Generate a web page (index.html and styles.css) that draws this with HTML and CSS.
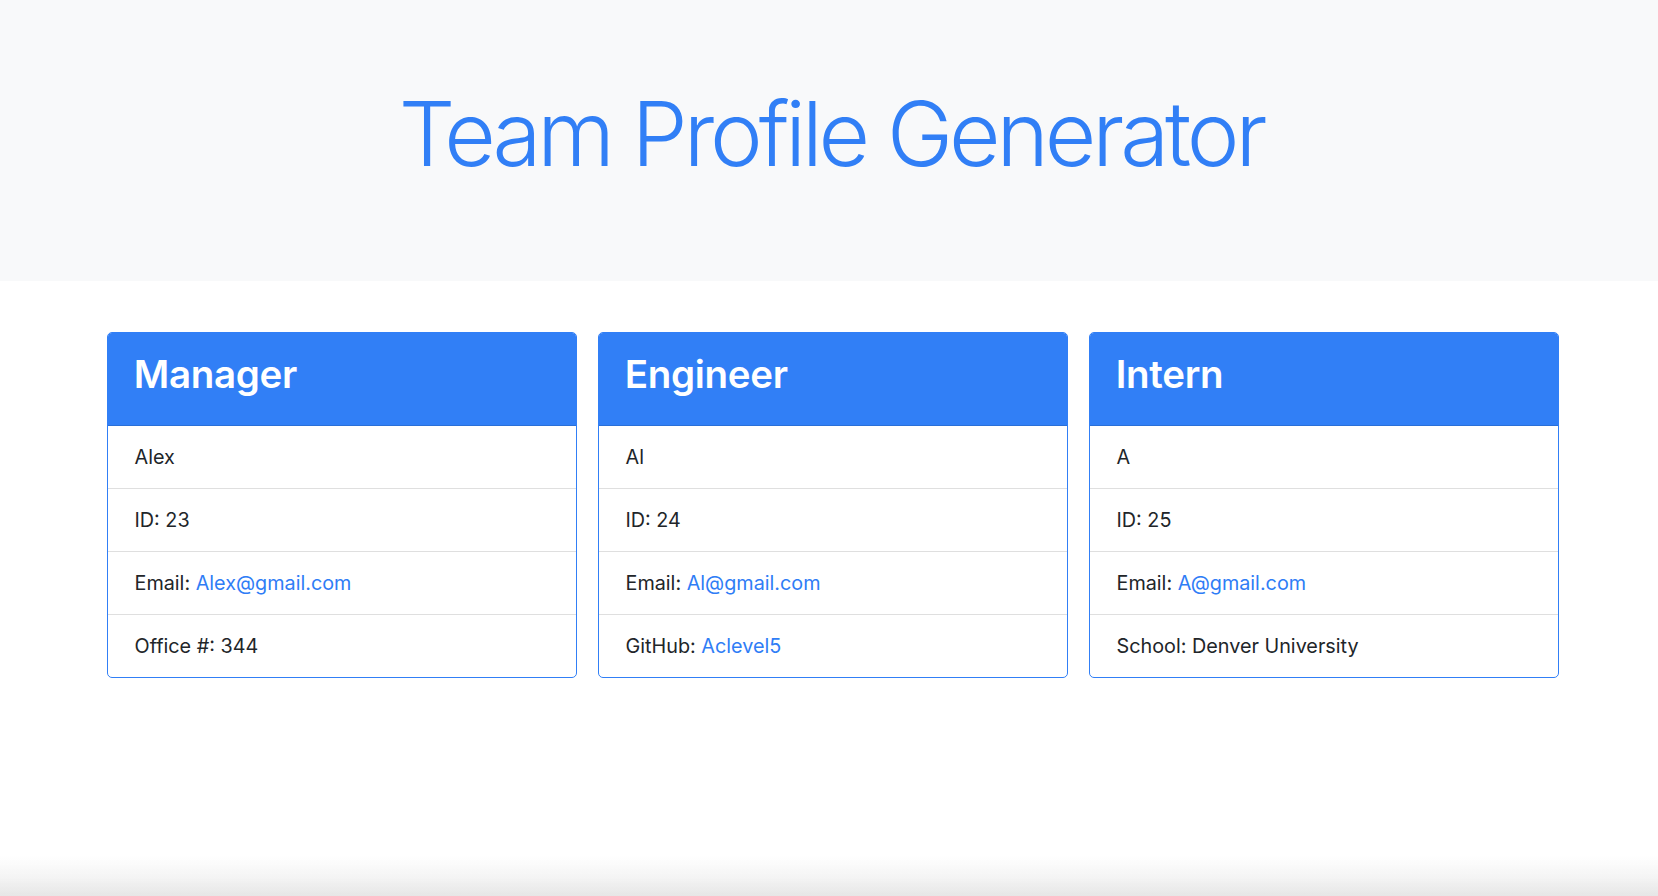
FILE: index.html
```html
<!DOCTYPE html>
<html lang="en">
<head>
<meta charset="utf-8">
<title>Team Profile Generator</title>
<link rel="stylesheet" href="styles.css">
</head>
<body>
<header class="jumbotron">
  <h1 class="title">Team Profile Generator</h1>
</header>
<main class="team">
  <section class="card">
    <div class="card-header"><h2>Manager</h2></div>
    <ul class="list">
      <li>Alex</li>
      <li>ID: 23</li>
      <li>Email: <a href="#">Alex@gmail.com</a></li>
      <li>Office #: 344</li>
    </ul>
  </section>
  <section class="card">
    <div class="card-header"><h2>Engineer</h2></div>
    <ul class="list">
      <li>Al</li>
      <li>ID: 24</li>
      <li>Email: <a href="#">Al@gmail.com</a></li>
      <li>GitHub: <a href="#">Aclevel5</a></li>
    </ul>
  </section>
  <section class="card">
    <div class="card-header"><h2>Intern</h2></div>
    <ul class="list">
      <li>A</li>
      <li>ID: 25</li>
      <li>Email: <a href="#">A@gmail.com</a></li>
      <li>School: Denver University</li>
    </ul>
  </section>
</main>
<div class="bottom-shade"></div>
</body>
</html>
```
FILE: styles.css
```css
* { box-sizing: border-box; }
html, body { margin: 0; padding: 0; }
body {
  font-family: Inter, "Noto Sans", "Liberation Sans", sans-serif;
  color: #212529;
  background: #ffffff;
  width: 1658px;
  height: 896px;
  overflow: hidden;
}
.jumbotron {
  background: #f8f9fa;
  height: 281px;
  display: flex;
  justify-content: center;
  padding-top: 81px;
  padding-left: 4px;
}
.title {
  margin: 0;
  font-size: 89px;
  font-weight: 300;
  line-height: 1.2;
  letter-spacing: -4.1px;
  color: #317ff6;
}
.team {
  margin: 51px 0 0 107px;
  width: 1452px;
  display: grid;
  grid-template-columns: repeat(3, 1fr);
  gap: 21px;
}
.card {
  border: 1px solid #317ff6;
  border-radius: 5px;
  overflow: hidden;
  background: #fff;
}
.card-header {
  background: #317ff6;
  color: #fff;
  padding: 16px 25.7px 15px;
  border-bottom: 1px solid rgba(0, 0, 0, 0.125);
  height: 93px;
}
.card-header h2 {
  margin: 0;
  font-size: 38.5px;
  font-weight: 600;
  line-height: 50px;
  letter-spacing: -0.3px;
}
.list {
  list-style: none;
  margin: 0;
  padding: 0;
}
.list li {
  padding: 16px 25.7px 15px 26.5px;
  font-size: 19.8px;
  line-height: 31px;
  height: 63px;
  border-bottom: 1px solid #dfdfdf;
}
.list li:last-child { border-bottom: 0; height: 62px; }
.list a {
  color: #2f7df6;
  text-decoration: none;
}
.bottom-shade {
  position: fixed;
  left: 0;
  right: 0;
  bottom: 0;
  height: 40px;
  background: linear-gradient(to bottom, rgba(230,230,230,0) 0%, rgba(230,230,230,0.45) 55%, #e6e6e6 100%);
  pointer-events: none;
}
```
